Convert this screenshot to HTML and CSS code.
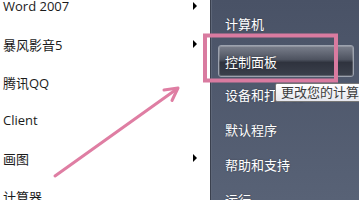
FILE: index.html
```html
<!DOCTYPE html>
<html>
<head>
<meta charset="utf-8">
<link rel="stylesheet" href="styles.css">
</head>
<body>
<div class="screen">
  <div class="programs">
    <div class="prog"><span>Word 2007</span><i class="sub"></i></div>
    <div class="prog"><span>暴风影音5</span><i class="sub"></i></div>
    <div class="prog"><span>腾讯QQ</span></div>
    <div class="prog"><span>Client</span></div>
    <div class="prog"><span>画图</span><i class="sub"></i></div>
    <div class="prog"><span>计算器</span></div>
  </div>
  <div class="places">
    <div class="place first">计算机</div>
    <div class="place active">控制面板</div>
    <div class="place">设备和打印机</div>
    <div class="place">默认程序</div>
    <div class="place">帮助和支持</div>
    <div class="place">运行<span class="dots">...</span></div>
  </div>
  <div class="tooltip">更改您的计算机设置并自定义其功能。</div>
  <svg class="marks" width="359" height="200" viewBox="0 0 359 200">
    <rect x="205" y="35.5" width="131" height="45" fill="none" stroke="#d97ba0" stroke-width="4"/>
    <line x1="55" y1="176" x2="177.5" y2="88.5" stroke="#df7ea3" stroke-width="3" stroke-linecap="round"/>
    <polyline points="164,90 178,88 172,100.5" fill="none" stroke="#df7ea3" stroke-width="3" stroke-linecap="round" stroke-linejoin="round"/>
  </svg>
</div>
</body>
</html>
```
FILE: styles.css
```css
html, body {
  margin: 0;
  padding: 0;
}
body {
  width: 359px;
  height: 200px;
  overflow: hidden;
  font-family: "Open Sans", "Noto Sans CJK SC", sans-serif;
  font-size: 13px;
}
.screen {
  position: relative;
  display: flex;
  width: 359px;
  height: 200px;
  overflow: hidden;
}
.programs {
  width: 210px;
  flex: none;
  background: #fff;
  margin-top: -13px;
}
.prog {
  height: 38px;
  display: flex;
  align-items: center;
  justify-content: space-between;
  padding: 0 13px 0 3px;
  color: #1b1b1b;
}
.sub {
  width: 0;
  height: 0;
  border-left: 4px solid #000;
  border-top: 4px solid transparent;
  border-bottom: 4px solid transparent;
}
.places {
  flex: 1;
  background: linear-gradient(#495266, #586276);
  border-left: 1px solid #3a404e;
  box-shadow: inset 1px 0 0 #5d6678;
  padding-top: 5px;
  color: #fff;
  text-shadow: 0 0 2px rgba(0,0,0,0.35);
}
.place {
  height: 35px;
  display: flex;
  align-items: center;
  padding-left: 14px;
  white-space: nowrap;
}
.place.first {
  height: 36px;
}
.place.active {
  height: 30px;
  margin: 4px 5px 0 7px;
  padding-left: 6px;
  border: 1px solid #9ca2ae;
  border-radius: 3px;
  background: linear-gradient(#7a7f8c 0%, #4e5360 45%, #2f333e 55%, #3b404c 100%);
  box-shadow: inset 0 0 0 1px rgba(255,255,255,0.18);
}
.dots {
  margin-left: 26px;
  letter-spacing: 2px;
}
.tooltip {
  position: absolute;
  left: 275px;
  top: 83px;
  height: 17px;
  line-height: 17px;
  padding: 0 5px;
  background: linear-gradient(#ffffff, #e6e7ee);
  border: 1px solid #767676;
  border-radius: 2px;
  color: #3c3c3c;
  white-space: nowrap;
}
.marks {
  position: absolute;
  left: 0;
  top: 0;
  pointer-events: none;
}
```
